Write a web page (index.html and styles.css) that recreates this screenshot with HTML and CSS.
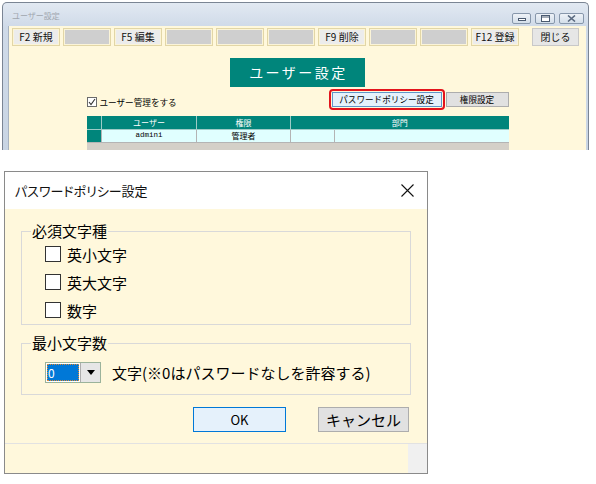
FILE: index.html
```html
<!DOCTYPE html>
<html lang="ja">
<head>
<meta charset="utf-8">
<title>ユーザー設定</title>
<link rel="stylesheet" href="styles.css">
</head>
<body>
<div class="page">
  <div class="win">
    <div class="win-title">
      <span class="win-caption">ユーザー設定</span>
      <div class="win-controls">
        <span class="wc wc-min"><svg width="8" height="5" viewBox="0 0 8 5"><rect x="0.5" y="2.5" width="7" height="2" fill="#fff" stroke="#4a5a70" stroke-width="1"/></svg></span>
        <span class="wc wc-max"><svg width="9" height="7" viewBox="0 0 9 7"><rect x="0.5" y="0.5" width="8" height="6" fill="#fff" stroke="#4a5a70" stroke-width="1"/><line x1="1" y1="2" x2="8" y2="2" stroke="#4a5a70"/></svg></span>
        <span class="wc wc-close"><svg width="9" height="7" viewBox="0 0 9 7"><path d="M1 0.5 L8 6.5 M8 0.5 L1 6.5" stroke="#5a6a80" stroke-width="1.6" fill="none"/></svg></span>
      </div>
    </div>
    <div class="win-client">
      <div class="toolbar">
        <div class="fkeys">
          <span class="fk">F2 新規</span>
          <span class="fk blank"></span>
          <span class="fk">F5 編集</span>
          <span class="fk blank"></span>
          <span class="fk blank"></span>
          <span class="fk blank"></span>
          <span class="fk">F9 削除</span>
          <span class="fk blank"></span>
          <span class="fk blank"></span>
          <span class="fk">F12 登録</span>
        </div>
        <span class="fk close-btn">閉じる</span>
      </div>
      <div class="content">
        <div class="banner">ユーザー設定</div>
        <div class="panel">
          <div class="panel-bar">
            <label class="chk-small">
              <span class="cb-small"><svg width="8" height="8" viewBox="0 0 8 8"><path d="M1 4 L3 6.5 L7 1" stroke="#333" stroke-width="1.1" fill="none"/></svg></span>
              ユーザー管理をする
            </label>
            <div class="panel-actions">
              <span class="highlight"><span class="btn-sm btn-focus">パスワードポリシー設定</span></span>
              <span class="btn-sm">権限設定</span>
            </div>
          </div>
          <table class="grid">
            <colgroup>
              <col class="c0"><col class="c1"><col class="c2"><col class="c3"><col class="c4">
            </colgroup>
            <tr class="grid-head">
              <th class="rowhead"></th>
              <th>ユーザー</th>
              <th>権限</th>
              <th colspan="2">部門</th>
            </tr>
            <tr class="grid-row">
              <td class="rowhead"></td>
              <td class="mono">admini</td>
              <td>管理者</td>
              <td></td>
              <td></td>
            </tr>
          </table>
          <div class="grid-empty"></div>
        </div>
      </div>
    </div>
  </div>

  <div class="dlg">
    <div class="dlg-title">
      <span class="dlg-caption">パスワードポリシー設定</span>
      <svg class="dlg-close" width="13" height="13" viewBox="0 0 13 13"><path d="M0.5 0.5 L12.5 12.5 M12.5 0.5 L0.5 12.5" stroke="#111" stroke-width="1.1" fill="none"/></svg>
    </div>
    <div class="dlg-body">
      <fieldset class="group">
        <legend>必須文字種</legend>
        <div class="group-rows">
          <div class="chk-row"><span class="cb"></span>英小文字</div>
          <div class="chk-row"><span class="cb"></span>英大文字</div>
          <div class="chk-row"><span class="cb"></span>数字</div>
        </div>
      </fieldset>
      <fieldset class="group group2">
        <legend>最小文字数</legend>
        <div class="combo-row">
          <div class="combo">
            <span class="combo-val">0</span>
            <span class="combo-btn"><svg width="8" height="5" viewBox="0 0 8 5"><path d="M0 0 H8 L4 5 Z" fill="#000"/></svg></span>
          </div>
          <span class="combo-label">文字(※0はパスワードなしを許容する)</span>
        </div>
      </fieldset>
      <div class="dlg-buttons">
        <span class="btn btn-ok">OK</span>
        <span class="btn">キャンセル</span>
      </div>
    </div>
    <div class="dlg-status">
      <span class="status-main"></span>
      <span class="status-grip"></span>
    </div>
  </div>
</div>
</body>
</html>
```

FILE: styles.css
```css
* { box-sizing: border-box; }
html, body { margin: 0; padding: 0; background: #fff; }
body {
  font-family: "Noto Sans CJK JP", "Noto Sans", sans-serif;
  color: #000;
  width: 596px;
  height: 484px;
  overflow: hidden;
}
.page { padding-top: 2px; }

/* ---------- top window ---------- */
.win {
  margin-left: 2px;
  width: 587px;
  height: 148px;
  border: 1px solid #7b8594;
  border-bottom: 0;
  border-radius: 5px 5px 0 0;
  background: linear-gradient(#e2e9f2, #cfdae8 24px, #c9d5e4);
  overflow: hidden;
  display: flex;
  flex-direction: column;
}
.win-title {
  height: 23px;
  flex: none;
  display: flex;
  align-items: flex-end;
  justify-content: space-between;
  padding: 0 4px 2px 9px;
}
.win-caption {
  font-size: 8px;
  line-height: 10px;
  color: #a0a6ae;
  margin-bottom: 3px;
}
.win-controls { display: flex; gap: 4px; }
.wc {
  height: 11px;
  border: 1px solid #8797ab;
  border-radius: 2px;
  background: linear-gradient(#eef2f7, #d3deea);
  display: flex;
  align-items: center;
  justify-content: center;
}
.wc-min { width: 19px; }
.wc-max { width: 20px; }
.wc-close { width: 25px; }

.win-client {
  flex: 1;
  margin: 0 2px 0 5px;
  background: #fff8dc;
  border-left: 1px solid #a9b4c2;
}
.toolbar {
  display: flex;
  height: 22px;
  padding: 2px 0 0 3px;
}
.fkeys { display: flex; gap: 3px; }
.fk {
  width: 48px;
  height: 18px;
  border: 1px solid #e2d6a6;
  box-shadow: inset 0 0 0 1px #fbf4d8;
  background: #ececec;
  font-size: 10px;
  line-height: 16px;
  text-align: center;
  color: #111;
}
.fk.blank { background: #cfcfcf; }
.close-btn {
  margin-left: 13px;
  width: 47px;
  background: #e6e6e6;
  border-color: #c8c8c8;
  box-shadow: none;
}

.content { padding-top: 10px; }
.banner {
  width: 135px;
  height: 29px;
  margin: 0 auto;
  background: #00857b;
  color: #fff;
  font-size: 14px;
  letter-spacing: 2.5px;
  line-height: 29px;
  text-align: center;
  padding-left: 2px;
}
.panel {
  width: 422px;
  margin: 2px auto 0;
}
.panel-bar {
  height: 21px;
  display: flex;
  justify-content: space-between;
  align-items: center;
}
.chk-small {
  display: flex;
  align-items: center;
  gap: 3px;
  font-size: 8.6px;
  line-height: 10px;
  padding-top: 5px;
}
.cb-small {
  width: 10px;
  height: 10px;
  border: 1px solid #6b6b6b;
  background: #fff;
  display: flex;
  align-items: center;
  justify-content: center;
}
.panel-actions { display: flex; align-items: center; }
.highlight {
  display: flex;
  border: 2px solid #e3141c;
  border-radius: 4px;
  padding: 1px;
}
.btn-sm {
  height: 15px;
  width: 63px;
  border: 1px solid #adadad;
  background: #e1e1e1;
  font-size: 8.6px;
  line-height: 13px;
  text-align: center;
}
.btn-focus {
  width: 110px;
  border-color: #5e96c8;
  background: #e5f1fb;
}
.highlight + .btn-sm { margin-left: 1px; }

.grid {
  margin-top: 6px;
  width: 422px;
  border-collapse: collapse;
  table-layout: fixed;
}
.c0 { width: 15px; }
.c1 { width: 95px; }
.c2 { width: 94px; }
.c3 { width: 44px; }
.c4 { width: 174px; }
.grid th, .grid td {
  padding: 0;
  font-size: 8px;
  line-height: 11px;
  text-align: center;
  font-weight: normal;
}
.grid th {
  height: 13px;
  background: #00857b;
  color: #fff;
  border: 1px solid #9ccbc6;
  border-top: 0;
}
.grid td {
  height: 13px;
  background: #e0ffff;
  border: 1px solid #b4b4b4;
}
.grid th:first-child, .grid td:first-child { border-left: 0; }
.grid th:last-child, .grid td:last-child { border-right: 0; }
.grid .rowhead { background: #00857b; }
.grid .mono { font-family: "Liberation Mono", "DejaVu Sans Mono", monospace; font-size: 7.5px; }
.grid-empty { height: 20px; background: #d4d0c8; }

/* ---------- dialog ---------- */
.dlg {
  margin: 21px 0 0 4px;
  width: 424px;
  height: 303px;
  border: 1px solid #8a8a8a;
  background: #fff8dc;
  display: flex;
  flex-direction: column;
}
.dlg-title {
  height: 37px;
  flex: none;
  background: #fff;
  display: flex;
  align-items: center;
  justify-content: space-between;
  padding: 0 13px 0 10px;
}
.dlg-caption {
  font-size: 13px;
  font-feature-settings: "palt";
  color: #111;
}
.dlg-body {
  height: 234px;
  flex: none;
  padding: 13px 0 0 16px;
}
.group {
  margin: 0;
  padding: 0;
  width: 390px;
  border: 1px solid #d9d9d9;
  min-inline-size: 0;
}
.group legend {
  margin-left: 9px;
  padding: 0 1px;
  font-size: 15px;
  line-height: 18px;
}
.group-rows { padding-left: 23px; }
.chk-row {
  display: flex;
  align-items: center;
  gap: 6px;
  height: 28px;
  font-size: 15px;
}
.cb {
  width: 16px;
  height: 16px;
  border: 1px solid #333;
  background: #fff;
}
.group2 { margin-top: 9px; }
.combo-row {
  display: flex;
  align-items: center;
  padding: 10px 0 11px 23px;
}
.combo {
  width: 56px;
  height: 21px;
  border: 1px solid #9bb39b;
  background: #fff;
  display: flex;
}
.combo-val {
  flex: 1;
  margin: 1px;
  background: #0078d7;
  outline: 1px dotted #e08a30;
  outline-offset: -1px;
  color: #fff;
  font-size: 12px;
  line-height: 17px;
  padding-left: 1px;
}
.combo-btn {
  width: 20px;
  border-left: 1px solid #adadad;
  background: #e6e6e6;
  display: flex;
  align-items: center;
  justify-content: center;
}
.combo-label {
  margin-left: 11px;
  font-size: 15px;
}
.dlg-buttons {
  display: flex;
  gap: 32px;
  margin-top: 12px;
  padding-left: 172px;
}
.btn {
  width: 91px;
  height: 25px;
  border: 1px solid #adadad;
  background: #e1e1e1;
  font-size: 15px;
  line-height: 23px;
  text-align: center;
}
.btn-ok {
  width: 93px;
  border-color: #0078d7;
  background: #e5f1fb;
  font-size: 13px;
}
.dlg-status {
  flex: 1;
  display: flex;
  border-top: 1px solid #e2e2e2;
}
.status-main { flex: 1; }
.status-grip { width: 19px; background: #f0f0f0; }
```
